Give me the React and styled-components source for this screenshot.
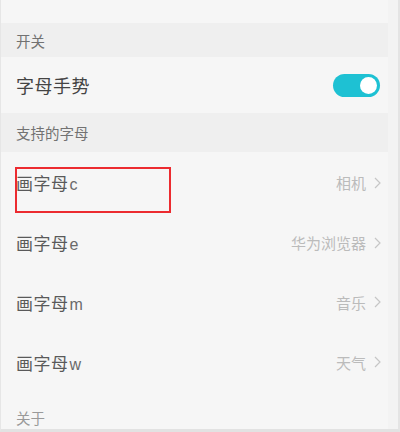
import styled, { createGlobalStyle } from "styled-components"

const GlobalStyle = createGlobalStyle`
  html, body {
    margin: 0;
    padding: 0;
    background: #f3f3f3;
  }
  body {
    font-family: "Noto Sans CJK SC", "Noto Sans", sans-serif;
  }
`

const Frame = styled.div`
  width: 400px;
  height: 432px;
  box-sizing: border-box;
  display: flex;
  overflow: hidden;
  border-left: 1px solid #e6e6e6;
  border-right: 2px solid #e4e4e4;
  border-bottom: 3px solid #e2e2e2;
  background: #f3f3f3;
`

const Screen = styled.div`
  width: 387px;
  display: flex;
  flex-direction: column;
  background: #f6f6f6;
`

const Gutter = styled.div`
  flex: 1;
  background: #f3f3f3;
`

const TopSpace = styled.div`
  height: 23px;
  flex-shrink: 0;
`

const SectionHeader = styled.div`
  height: ${(p) => p.$h}px;
  flex-shrink: 0;
  display: flex;
  align-items: center;
  padding-left: 15px;
  background: ${(p) => (p.$plain ? "#f6f6f6" : "#efefef")};
  font-size: 14.5px;
  color: ${(p) => (p.$faded ? "#9a9a9a" : "#727272")};
`

const Row = styled.div`
  position: relative;
  height: ${(p) => p.$h}px;
  flex-shrink: 0;
  display: flex;
  align-items: center;
  justify-content: space-between;
  padding: 0 7px 0 15px;
`

const Label = styled.span`
  font-size: ${(p) => (p.$dark ? 18 : 17)}px;
  color: ${(p) => (p.$dark ? "#444" : "#5a5a5a")};
  letter-spacing: 0.5px;
`

const Letter = styled.span`
  font-family: "Liberation Sans", Arial, sans-serif;
  font-size: 16px;
  color: #6a6a6a;
  margin-left: 1px;
`

const Value = styled.div`
  display: flex;
  align-items: center;
  gap: 8px;
  font-size: 15px;
  color: #bbbbbb;
`

const Toggle = styled.div`
  width: 47px;
  height: 23px;
  border-radius: 12px;
  background: #1ec1d3;
  display: flex;
  align-items: center;
  justify-content: flex-end;
  padding-right: 3px;
  box-sizing: border-box;
  margin-right: 1px;
`

const Knob = styled.div`
  width: 17px;
  height: 17px;
  border-radius: 50%;
  background: #fff;
`

const Marker = styled.div`
  position: absolute;
  left: 14px;
  top: 15px;
  width: 156px;
  height: 46px;
  box-sizing: border-box;
  border: 2px solid #ec2b30;
`

const Chevron = () => (
  <svg width="7" height="12" viewBox="0 0 7 12" fill="none">
    <path d="M1 1l5 5-5 5" stroke="#c6c6c6" strokeWidth="1.2" />
  </svg>
)

const items = [
  { letter: "c", app: "相机", h: 61, marked: true },
  { letter: "e", app: "华为浏览器", h: 59 },
  { letter: "m", app: "音乐", h: 60 },
  { letter: "w", app: "天气", h: 60 },
]

export default function App() {
  return (
    <>
      <GlobalStyle />
      <Frame>
        <Screen>
          <TopSpace />
          <SectionHeader $h={34}>开关</SectionHeader>
          <Row $h={56}>
            <Label $dark>字母手势</Label>
            <Toggle>
              <Knob />
            </Toggle>
          </Row>
          <SectionHeader $h={39}>支持的字母</SectionHeader>
          {items.map((it) => (
            <Row key={it.letter} $h={it.h}>
              <Label>
                画字母<Letter>{it.letter}</Letter>
              </Label>
              <Value>
                {it.app}
                <Chevron />
              </Value>
              {it.marked && <Marker />}
            </Row>
          ))}
          <SectionHeader $h={50} $plain $faded>关于</SectionHeader>
        </Screen>
        <Gutter />
      </Frame>
    </>
  )
}
